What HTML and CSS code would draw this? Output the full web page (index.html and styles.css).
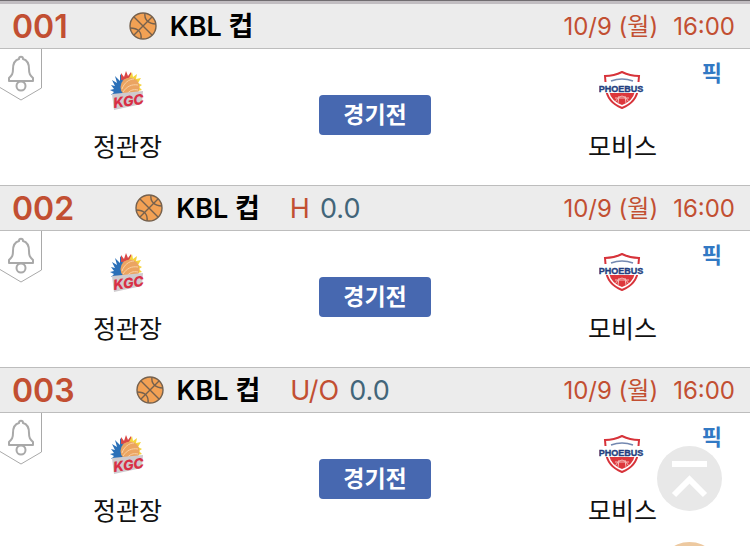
FILE: index.html
```html
<!DOCTYPE html>
<html lang="ko">
<head>
	<title>KBL 컵</title>
	<meta charset="utf-8">
	<meta name="viewport" content="width=device-width, initial-scale=1">
	<link rel="stylesheet" href="styles.css">
</head>
<body>
	<svg class="sprite" aria-hidden="true">
		<symbol id="ball" viewBox="0 0 28 28">
			<circle cx="14" cy="14" r="13" fill="#f2a154"/>
			<g fill="none" stroke="#75614e" stroke-width="1.4">
				<circle cx="14" cy="14" r="13"/>
				<path d="M5 5L23 23M5 23L23 5"/>
				<path d="M16 1C15 7 19 12 27 12M12 27C13 20 9 16 1 16"/>
			</g>
		</symbol>
		<symbol id="bell" viewBox="0 0 42 52">
			<g fill="none" stroke="#a9a9a9" stroke-width="1">
				<path d="M41.5 0V39L21 51L0 38.5"/>
				<path d="M19 10C19 7 23 7 23 10C27 11 29 15 29 20C29 25 30 26 33 29V32H9V29C12 26 13 25 13 20C13 15 15 11 19 10Z" stroke-width="2" stroke-linejoin="round"/>
				<circle cx="21" cy="37" r="4.5" stroke-width="2"/>
			</g>
		</symbol>
		<symbol id="kgc" viewBox="0 0 46 46">
			<path d="M22 6L20 13L16 7L16 14L11 9L13 16L8 13L11 19L7 18L10 22L6 23L10 25L7 28L20 28V14Z" fill="#2b70b8"/>
			<path d="M17 13L17 6L20 10L22 4L24 9L27 5L28 12Z" fill="#d94746"/>
			<path d="M25 11L28 5L29 10L33 7L32 12L37 11L34 16L38 18L35 20L38 23L34 24L37 28H22Z" fill="#f5d43d"/>
			<circle cx="26" cy="20" r="9.5" fill="#eba461"/>
			<path d="M18 22C20 16 25 12 30 12M19 25C23 19 28 17 34 18M22 28C26 23 29 22 34 23" fill="none" stroke="#f9d1a4"/>
			<path d="M8 27L39 24L38 37L10 43Z" fill="#cfcbce"/>
			<text class="kgc-text" x="10" y="41" transform="rotate(-8 10 41)">KGC</text>
		</symbol>
		<symbol id="phoebus" viewBox="0 0 46 46">
			<path d="M6 9Q15 9 23 5Q31 9 40 9L39 21Q38 35 23 41Q8 35 7 21Z" fill="#fff" stroke="#d7333a" stroke-width="2"/>
			<path d="M10 24H36Q34 34 23 38Q12 34 10 24Z" fill="#dd373c"/>
			<path d="M12 14Q23 10 34 14" fill="none" stroke="#7388b0" stroke-width="1.5"/>
			<path d="M2 15H44L42 20L43 26H3L4 20Z" fill="#fff"/>
			<text class="phoebus-text" x="22" y="25" text-anchor="middle">PHOEBUS</text>
			<path d="M16 35Q23 23 30 35M16 31H30M20 29L19 36M26 29L27 36" fill="none" stroke="#f6bab7"/>
		</symbol>
	</svg>

	<main class="games">
		<section class="game">
			<header class="game-header">
				<span class="number">001</span>
				<svg class="ball"><use href="#ball"/></svg>
				<h2 class="league">KBL 컵</h2>
				<time class="date"><span>10/9 (월)</span><span>16:00</span></time>
			</header>
			<div class="game-body">
				<button class="alarm" aria-label="알림"><svg><use href="#bell"/></svg></button>
				<div class="team"><svg class="logo"><use href="#kgc"/></svg><span>정관장</span></div>
				<button class="status">경기전</button>
				<div class="team"><svg class="logo"><use href="#phoebus"/></svg><span>모비스</span></div>
				<a class="pick" href="#">픽</a>
			</div>
		</section>

		<section class="game">
			<header class="game-header">
				<span class="number">002</span>
				<svg class="ball"><use href="#ball"/></svg>
				<h2 class="league">KBL 컵</h2>
				<span class="type">H</span>
				<span class="value">0.0</span>
				<time class="date"><span>10/9 (월)</span><span>16:00</span></time>
			</header>
			<div class="game-body">
				<button class="alarm" aria-label="알림"><svg><use href="#bell"/></svg></button>
				<div class="team"><svg class="logo"><use href="#kgc"/></svg><span>정관장</span></div>
				<button class="status">경기전</button>
				<div class="team"><svg class="logo"><use href="#phoebus"/></svg><span>모비스</span></div>
				<a class="pick" href="#">픽</a>
			</div>
		</section>

		<section class="game">
			<header class="game-header">
				<span class="number">003</span>
				<svg class="ball"><use href="#ball"/></svg>
				<h2 class="league">KBL 컵</h2>
				<span class="type">U/O</span>
				<span class="value">0.0</span>
				<time class="date"><span>10/9 (월)</span><span>16:00</span></time>
			</header>
			<div class="game-body">
				<button class="alarm" aria-label="알림"><svg><use href="#bell"/></svg></button>
				<div class="team"><svg class="logo"><use href="#kgc"/></svg><span>정관장</span></div>
				<button class="status">경기전</button>
				<div class="team"><svg class="logo"><use href="#phoebus"/></svg><span>모비스</span></div>
				<a class="pick" href="#">픽</a>
			</div>
		</section>
	</main>

	<div class="floating">
		<button class="to-top" aria-label="맨 위로">
			<svg viewBox="0 0 65 65">
				<path d="M15 18H50M17 49L32.5 33.5L48 49" fill="none" stroke="#fff" stroke-width="6"/>
			</svg>
		</button>
		<button class="more" aria-label="더보기"></button>
	</div>
</body>
</html>
```
FILE: styles.css
```css
* {
	box-sizing: border-box;
}

body {
	margin: 0;
	overflow-x: hidden;
	background: #fff;
	color: #111;
	font-family: Inter, "Noto Sans CJK KR", sans-serif;
	font-size: 24px;
}

button {
	padding: 0;
	border: 0;
	background: none;
	font: inherit;
	cursor: pointer;
}

.sprite {
	display: none;
}

.games {
	border-top: 1px solid #706c70;
}

.game-header {
	display: flex;
	align-items: center;
	height: 46px;
	padding: 0 15px 0 12px;
	border-top: 1px solid #bdbdbd;
	border-bottom: 1px solid #bdbdbd;
	background: #ececec;
	line-height: 42px;
}

.game-header > :not(svg) {
	padding-top: 2px;
}

.game:first-child .game-header {
	height: 48px;
	border-top: 3px solid #c1bdc1;
}

.number {
	color: #c24f32;
	font-size: 32px;
	font-weight: 600;
}

.ball {
	width: 28px;
	height: 28px;
	margin: 0 13px 0 61px;
}

.league {
	margin: 0;
	color: #000;
	font-size: 27px;
	font-weight: 600;
}

.type {
	margin-left: 30px;
	color: #c24f32;
	font-size: 27px;
	font-weight: 400;
}

.value {
	margin-left: 10px;
	color: #426579;
	font-size: 27px;
	font-weight: 400;
}

.date {
	display: flex;
	gap: 15px;
	margin-left: auto;
	color: #c24f32;
}

/* alarm and pick sit over the outer corners of the two team columns */
.game-body {
	position: relative;
	display: grid;
	grid-template-columns: 34fr 32fr 34fr;
	justify-items: center;
	align-items: start;
	height: 136px;
	padding-top: 18px;
}

.alarm {
	position: absolute;
	top: 0;
	left: 0;
}

.alarm svg {
	display: block;
	width: 42px;
	height: 52px;
}

.team {
	display: flex;
	flex-direction: column;
	align-items: center;
	gap: 16px;
	font-size: 25px;
	line-height: 36px;
}

.logo {
	width: 46px;
	height: 46px;
}

.kgc-text {
	fill: #d92f45;
	font: italic 800 14px Inter, sans-serif;
}

.phoebus-text {
	fill: #243f80;
	stroke: #243f80;
	stroke-width: 0.4px;
	font: 800 9px "Liberation Sans", sans-serif;
}

.status {
	width: 112px;
	height: 40px;
	margin-top: 28px;
	border-radius: 4px;
	background: #4768b0;
	color: #fff;
	font-size: 23px;
	font-weight: 600;
	line-height: 40px;
}

.pick {
	position: absolute;
	top: 6px;
	right: 28px;
	color: #3279c4;
	font-size: 22px;
	font-weight: 600;
	line-height: 36px;
	text-decoration: none;
}

.floating {
	position: fixed;
	right: 28px;
	bottom: -61px;
	display: grid;
	gap: 31px;
}

.to-top,
.more {
	width: 65px;
	height: 65px;
	border-radius: 50%;
}

.to-top {
	background: #e8e8e8;
}

.to-top svg {
	display: block;
}

.more {
	background: #edc9a0;
}
```
